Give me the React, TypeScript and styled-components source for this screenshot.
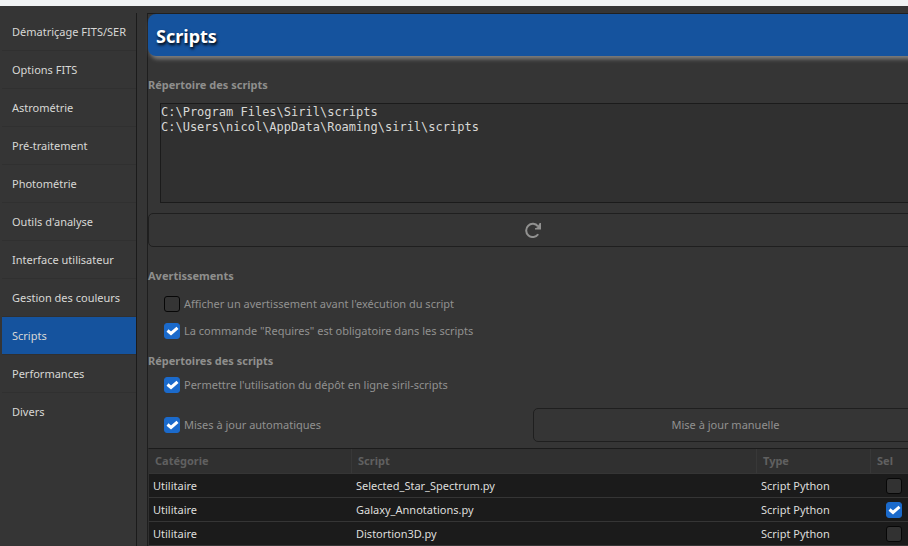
import React, { useState } from "react";
import styled, { createGlobalStyle, css } from "styled-components";

const GlobalStyle = createGlobalStyle`
  * { box-sizing: border-box; }
  body {
    margin: 0;
    background: #353535;
    color: #d8d8d6;
    font-family: "Noto Sans", "Open Sans", sans-serif;
    font-size: 11px;
    line-height: 16px;
    overflow: hidden;
  }
  button, input, textarea { font: inherit; margin: 0; }
`;

const Page = styled.div`
  display: flex;
  flex-direction: column;
  height: 100vh;
  overflow: hidden;
`;

const WindowEdge = styled.div`
  flex: none;
  height: 6px;
  margin-bottom: 7px;
  background: #f0f3f4;
`;

const Body = styled.div`
  display: flex;
  flex: 1;
  min-height: 0;
`;

const Sidebar = styled.nav`
  flex: none;
  width: 137px;
  padding-left: 2px;
  border-right: 1px solid #1b1b1b;
`;

const SidebarItem = styled.button<{ $selected: boolean }>`
  display: block;
  width: 100%;
  height: 38px;
  padding: 0 0 0 10px;
  border: 0;
  border-bottom: 1px solid #303030;
  background: ${(p) => (p.$selected ? "#15539e" : "transparent")};
  background-clip: padding-box;
  color: #d8d8d6;
  text-align: left;
  white-space: nowrap;
  &:last-child { border-bottom-color: transparent; }
`;

const Panel = styled.main`
  flex: 1;
  min-width: 0;
  margin-left: 10px;
  margin-right: -10px;
  border-top: 1px solid #1b1b1b;
  border-left: 1px solid #1e1e1e;
`;

const Banner = styled.h1`
  height: 42px;
  margin: 0 0 21px;
  padding-left: 8px;
  border-radius: 8px;
  background: #15539e;
  box-shadow: 2px 3px 4px #808080;
  color: #fff;
  font-size: 18px;
  line-height: 44px;
  text-shadow: 1px 2px 3px #000;
`;

const Heading = styled.h2`
  margin: 0;
  color: #8f8f8d;
  font-size: 11px;
  line-height: 16px;
`;

const Paths = styled.textarea`
  display: block;
  width: calc(100% - 12px);
  height: 100px;
  margin: 10px 0 10px 12px;
  padding: 1px 0;
  border: 1px solid #1b1b1b;
  background: #303030;
  color: #d8d8d6;
  font-family: "DejaVu Sans Mono", monospace;
  font-size: 12px;
  line-height: 15px;
  resize: none;
  outline: 0;
`;

const Button = styled.button`
  display: flex;
  align-items: center;
  justify-content: center;
  width: 100%;
  height: 34px;
  border: 1px solid #1f1f1f;
  border-radius: 5px;
  background: #353535;
  color: #919190;
`;

const Section = styled.section<{ $top: number }>`
  padding-top: ${(p) => p.$top}px;
`;

const Options = styled.div<{ $top: number }>`
  display: flex;
  flex-direction: column;
  gap: 11px;
  padding: ${(p) => p.$top}px 0 0 16px;
`;

const Option = styled.label`
  display: flex;
  align-items: center;
  gap: 4px;
  height: 16px;
  color: #919190;
  line-height: 18px;
  white-space: nowrap;
`;

const BoxWrap = styled.span`
  display: grid;
  width: 16px;
  height: 16px;
  > * { grid-area: 1 / 1; }
`;

const Box = styled.input<{ $dark?: boolean }>`
  appearance: none;
  width: 16px;
  height: 16px;
  border: 1px solid #070707;
  border-radius: 3px;
  background: ${(p) => (p.$dark ? "#323232" : "#353535")};
  &:checked {
    border-color: #1b6acb;
    background: #1b6acb;
  }
  & + svg { visibility: hidden; pointer-events: none; }
  &:checked + svg { visibility: visible; }
`;

const UpdateRow = styled.div`
  display: grid;
  grid-template-columns: 1fr 1fr;
  align-items: center;
  margin: 15px 0 6px;
  ${Option} { padding-left: 16px; }
`;

const Table = styled.table`
  width: 100%;
  border-collapse: separate;
  border-spacing: 0;
  table-layout: fixed;
  border-top: 1px solid #1b1b1b;
  border-left: 1px solid #303030;
`;

const cell = css`
  overflow: hidden;
  text-align: left;
  white-space: nowrap;
`;

const HeadCell = styled.th`
  ${cell}
  height: 25px;
  padding: 0 0 0 6px;
  border-right: 1px solid #383838;
  border-bottom: 1px solid #353535;
  background: #303030;
  color: #606060;
`;

const Cell = styled.td`
  ${cell}
  height: 24px;
  padding: 0 0 0 4px;
  border-bottom: 1px solid #353535;
  background: #1b1b1b;
  color: #dededc;
`;

const CheckCell = styled(Cell)`
  padding-left: 15px;
`;

function CheckBox({ defaultChecked, dark, label }: { defaultChecked?: boolean; dark?: boolean; label?: string }) {
  return (
    <BoxWrap>
      <Box type="checkbox" defaultChecked={defaultChecked} $dark={dark} aria-label={label} />
      <svg width="16" height="16" viewBox="0 0 16 16" aria-hidden="true">
        <path d="M3.5 7.5 7 10.5 13.5 4.8" fill="none" stroke="#fff" strokeWidth="3" />
      </svg>
    </BoxWrap>
  );
}

const PAGES = [
  "Dématriçage FITS/SER",
  "Options FITS",
  "Astrométrie",
  "Pré-traitement",
  "Photométrie",
  "Outils d'analyse",
  "Interface utilisateur",
  "Gestion des couleurs",
  "Scripts",
  "Performances",
  "Divers",
];

const SCRIPTS = [
  { name: "Selected_Star_Spectrum.py", selected: false },
  { name: "Galaxy_Annotations.py", selected: true },
  { name: "Distortion3D.py", selected: false },
];

export default function App() {
  const [page, setPage] = useState("Scripts");
  return (
    <Page>
      <GlobalStyle />
      <WindowEdge />
      <Body>
        <Sidebar>
          {PAGES.map((name) => (
            <SidebarItem key={name} type="button" $selected={name === page} onClick={() => setPage(name)}>
              {name}
            </SidebarItem>
          ))}
        </Sidebar>
        <Panel>
          <Banner>Scripts</Banner>
          <Heading id="paths">Répertoire des scripts</Heading>
          <Paths
            aria-labelledby="paths"
            spellCheck={false}
            defaultValue={"C:\\Program Files\\Siril\\scripts\nC:\\Users\\nicol\\AppData\\Roaming\\siril\\scripts"}
          />
          <Button type="button" aria-label="Actualiser">
            <svg width="16" height="16" viewBox="0 0 16 16" aria-hidden="true">
              <path d="M13.2 12.2A6.6 6.6 0 1 1 13 4.4" fill="none" stroke="#919190" strokeWidth="2" />
              <path d="M16 1V7.5H10V6.2L12.2 5.4L14.6 1Z" fill="#919190" />
            </svg>
          </Button>
          <Section $top={21}>
            <Heading>Avertissements</Heading>
            <Options $top={12}>
              <Option>
                <CheckBox />
                Afficher un avertissement avant l'exécution du script
              </Option>
              <Option>
                <CheckBox defaultChecked />
                La commande "Requires" est obligatoire dans les scripts
              </Option>
            </Options>
          </Section>
          <Section $top={14}>
            <Heading>Répertoires des scripts</Heading>
            <Options $top={8}>
              <Option>
                <CheckBox defaultChecked />
                Permettre l'utilisation du dépôt en ligne siril-scripts
              </Option>
            </Options>
            <UpdateRow>
              <Option>
                <CheckBox defaultChecked />
                Mises à jour automatiques
              </Option>
              <Button type="button">Mise à jour manuelle</Button>
            </UpdateRow>
          </Section>
          <Table>
            <colgroup>
              <col width="203" />
              <col />
              <col width="114" />
              <col width="47" />
            </colgroup>
            <thead>
              <tr>
                <HeadCell>Catégorie</HeadCell>
                <HeadCell>Script</HeadCell>
                <HeadCell>Type</HeadCell>
                <HeadCell>Sel</HeadCell>
              </tr>
            </thead>
            <tbody>
              {SCRIPTS.map((s) => (
                <tr key={s.name}>
                  <Cell>Utilitaire</Cell>
                  <Cell>{s.name}</Cell>
                  <Cell>Script Python</Cell>
                  <CheckCell>
                    <CheckBox dark defaultChecked={s.selected} label={s.name} />
                  </CheckCell>
                </tr>
              ))}
            </tbody>
          </Table>
        </Panel>
      </Body>
    </Page>
  );
}
